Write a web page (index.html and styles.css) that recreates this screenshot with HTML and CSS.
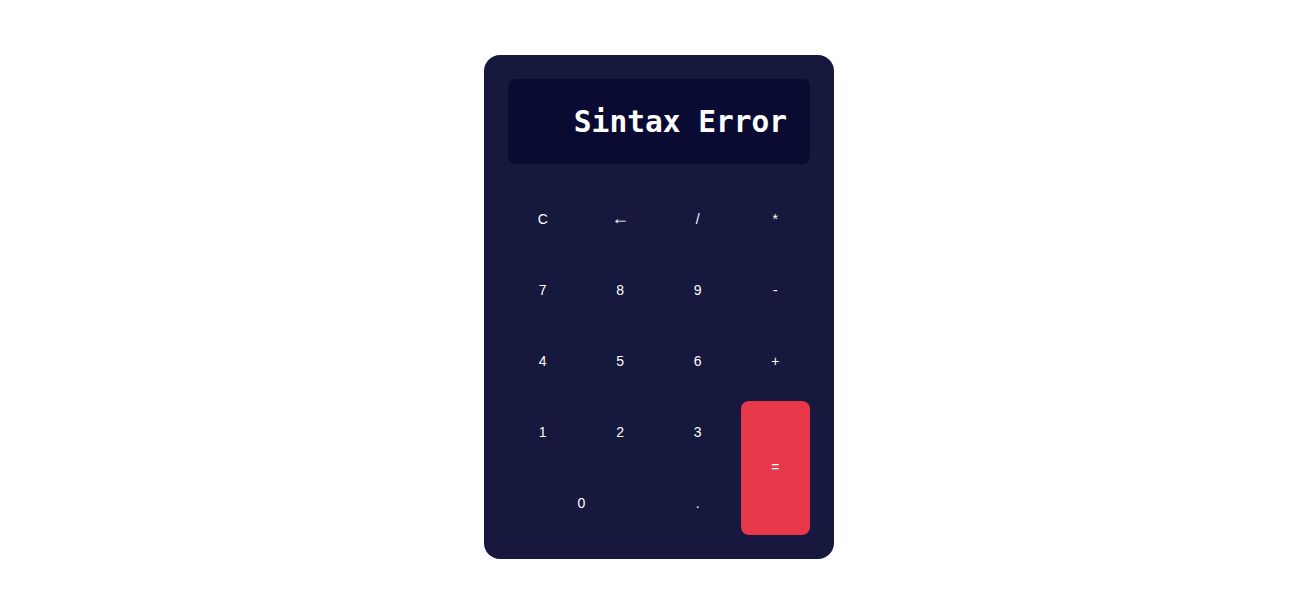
FILE: index.html
```html
<!DOCTYPE html>
<html lang="en">
<head>
<meta charset="utf-8">
<title>Calculator</title>
<link rel="stylesheet" href="styles.css">
</head>
<body>
<main class="page">
  <div class="calculator">
    <div class="display">Sintax Error</div>
    <div class="keys">
      <button class="key">C</button>
      <button class="key key-arrow">←</button>
      <button class="key">/</button>
      <button class="key">*</button>
      <button class="key">7</button>
      <button class="key">8</button>
      <button class="key">9</button>
      <button class="key">-</button>
      <button class="key">4</button>
      <button class="key">5</button>
      <button class="key">6</button>
      <button class="key">+</button>
      <button class="key">1</button>
      <button class="key">2</button>
      <button class="key">3</button>
      <button class="key key-equals">=</button>
      <button class="key key-zero">0</button>
      <button class="key">.</button>
    </div>
  </div>
</main>
</body>
</html>
```
FILE: styles.css
```css
* { box-sizing: border-box; }
html, body { margin: 0; padding: 0; background: #ffffff; }
.page {
  display: flex;
  justify-content: center;
  padding-top: 55px;
  padding-left: 11px;
}
.calculator {
  width: 350px;
  height: 504px;
  background: #16183d;
  border-radius: 16px;
  padding: 24px;
  display: flex;
  flex-direction: column;
  gap: 24px;
}
.display {
  height: 85px;
  flex: none;
  background: #090b33;
  border-radius: 8px;
  color: #ffffff;
  font-family: "DejaVu Sans Mono", monospace;
  font-weight: bold;
  font-size: 29.5px;
  display: flex;
  align-items: center;
  justify-content: flex-end;
  padding: 0 23px;
}
.keys {
  display: grid;
  grid-template-columns: repeat(4, 1fr);
  grid-auto-rows: 63px;
  gap: 8px;
}
.key {
  border: none;
  background: transparent;
  color: #ffffff;
  font-family: "Liberation Sans", Arial, sans-serif;
  font-size: 14px;
  border-radius: 8px;
  padding: 0 0 2px;
}
.key-arrow { font-size: 18px; }
.key-zero { grid-column: span 2; }
.key-equals {
  grid-column: 4;
  grid-row: 4 / span 2;
  background: #e63849;
}
```
